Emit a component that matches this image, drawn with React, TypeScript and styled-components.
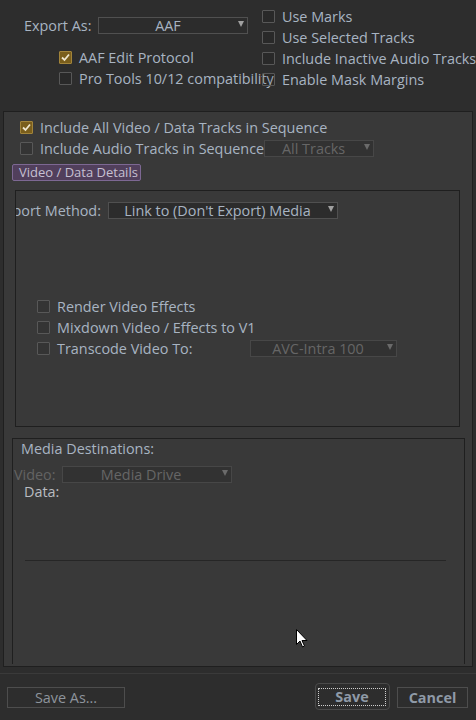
import React from "react";
import styled, { createGlobalStyle } from "styled-components";

const Global = createGlobalStyle`
  html, body { margin: 0; padding: 0; background: #2d2d2d; }
  body { font-family: "Open Sans", "Noto Sans", sans-serif; font-size: 14.4px; color: #a8b4c2; }
  #root { width: 476px; height: 720px; overflow: hidden; }
`;

const Page = styled.div`
  position: relative;
  width: 476px;
  height: 720px;
  display: flex;
  flex-direction: column;
  background: #2d2d2d;
  overflow: hidden;
`;

const Header = styled.div`
  flex: none;
  height: 111px;
  display: grid;
  grid-template-columns: 262px 1fr;
`;

const LeftCol = styled.div`
  display: flex;
  flex-direction: column;
  padding-top: 17px;
  min-width: 0;
`;

const RightCol = styled.div`
  display: flex;
  flex-direction: column;
  padding-top: 6px;
  min-width: 0;
  position: relative;
`;

const FieldRow = styled.div<{ $indent?: number; $gap?: number; $top?: number }>`
  display: flex;
  align-items: center;
  height: 17px;
  padding-left: ${(p) => p.$indent ?? 0}px;
  margin-top: ${(p) => p.$top ?? 0}px;
  gap: ${(p) => p.$gap ?? 0}px;
  white-space: nowrap;
`;

const Label = styled.span<{ $disabled?: boolean; $shift?: number }>`
  color: ${(p) => (p.$disabled ? "#636363" : "#a8b4c2")};
  margin-left: ${(p) => p.$shift ?? 0}px;
  white-space: nowrap;
  line-height: 18px;
`;

const CheckList = styled.div<{ $indent?: number; $top?: number }>`
  display: flex;
  flex-direction: column;
  padding-left: ${(p) => p.$indent ?? 0}px;
  margin-top: ${(p) => p.$top ?? 0}px;
`;

const CheckRow = styled.div`
  display: flex;
  align-items: center;
  height: 21px;
  white-space: nowrap;
`;

const CheckWrap = styled.div<{ $width?: number }>`
  display: flex;
  align-items: center;
  gap: 7px;
  flex: none;
  width: ${(p) => (p.$width ? `${p.$width}px` : "auto")};
`;

const Box = styled.span<{ $checked?: boolean }>`
  position: relative;
  z-index: 1;
  flex: none;
  width: 13px;
  height: 13px;
  box-sizing: border-box;
  border: 1px solid ${(p) => (p.$checked ? "#a2843a" : "#585858")};
  background: ${(p) => (p.$checked ? "#7a5e1c" : "rgba(0,0,0,0.08)")};
  border-radius: 1px;
  display: flex;
  align-items: center;
  justify-content: center;
`;

const SelectBox = styled.div<{ $width: number; $disabled?: boolean }>`
  flex: none;
  box-sizing: border-box;
  width: ${(p) => p.$width}px;
  height: 17px;
  border: 1px solid ${(p) => (p.$disabled ? "#474747" : "#505050")};
  background: ${(p) => (p.$disabled ? "#323232" : "#2c2c2c")};
  display: flex;
  align-items: flex-start;
  color: ${(p) => (p.$disabled ? "#666666" : "#a8b4c2")};
`;

const SelectText = styled.span`
  flex: 1;
  text-align: center;
  line-height: 16px;
  height: 15px;
  white-space: nowrap;
`;

const Arrow = styled.span<{ $disabled?: boolean }>`
  flex: none;
  width: 0;
  height: 0;
  margin: 3px 3px 0 2px;
  border-left: 3.5px solid transparent;
  border-right: 3.5px solid transparent;
  border-top: 6px solid ${(p) => (p.$disabled ? "#6a6a6a" : "#a0a0a0")};
`;

const Panel = styled.div`
  flex: 1;
  margin: 0 3px;
  border: 1px solid #1f1f1f;
  background: #393939;
  display: flex;
  flex-direction: column;
  padding: 5px 0 2px 0;
  min-height: 0;
`;

const TabButton = styled.div`
  align-self: flex-start;
  margin: 5px 0 0 8px;
  box-sizing: border-box;
  height: 17px;
  width: 129px;
  padding-left: 6px;
  background: #513f5c;
  border: 1px solid #7d6893;
  border-radius: 2px;
  color: #c6c0d2;
  font-size: 13px;
  line-height: 15px;
  white-space: nowrap;
`;

const InnerBox = styled.div`
  flex: none;
  margin: 9px 0 0 11px;
  width: 445px;
  height: 237px;
  box-sizing: border-box;
  border: 1px solid #1f1f1f;
  overflow: hidden;
  display: flex;
  flex-direction: column;
  padding-top: 11px;
`;

const DestBox = styled.div`
  flex: 1;
  margin: 11px 0 0 8px;
  width: 453px;
  box-sizing: border-box;
  border: 1px solid #1f1f1f;
  border-bottom: none;
  display: flex;
  flex-direction: column;
`;

const DestTitle = styled.div`
  padding-left: 8px;
  height: 20px;
  line-height: 20px;
  white-space: nowrap;
`;

const DataRow = styled.div`
  padding-left: 11px;
  height: 18px;
  line-height: 18px;
  color: #b9bcc0;
`;

const Rule = styled.div`
  margin: 59px 0 0 12px;
  width: 421px;
  height: 1px;
  background: #262626;
`;

const Footer = styled.div`
  flex: none;
  margin-top: 6px;
  height: 46px;
  border-top: 1px solid #3a3a3a;
  display: flex;
  align-items: center;
  padding: 0 8px 0 7px;
`;

const Button = styled.div<{ $width: number; $bold?: boolean }>`
  box-sizing: border-box;
  width: ${(p) => p.$width}px;
  height: 21px;
  border: 1px solid #4d4d4d;
  text-align: center;
  line-height: 19px;
  color: ${(p) => (p.$bold ? "#8f9aa7" : "#8d949c")};
  font-weight: ${(p) => (p.$bold ? 700 : 400)};
  white-space: nowrap;
`;

const Spacer = styled.div`
  flex: 1;
`;

const FocusRing = styled.div`
  box-sizing: border-box;
  width: 75px;
  height: 27px;
  border: 1px solid #4a4a4a;
  border-radius: 4px;
  padding: 4px 3px 3px 2px;
  margin-right: 7px;
  display: flex;
  margin-top: -2px;
`;

const FocusInner = styled.div`
  flex: 1;
  border: 1px dotted #cfcfcf;
  text-align: center;
  line-height: 16px;
  font-weight: 700;
  color: #8f9aa7;
`;

const CursorLayer = styled.svg`
  position: absolute;
  left: 296px;
  top: 629px;
  width: 13px;
  height: 20px;
`;

function Check({ label, checked, width, disabled }: { label: string; checked?: boolean; width?: number; disabled?: boolean }) {
  return (
    <CheckWrap $width={width}>
      <Box $checked={checked}>
        {checked && (
          <svg width="11" height="11" viewBox="0 0 11 11">
            <polyline points="2,5.5 4.5,8 9,2.5" fill="none" stroke="#efe6cf" strokeWidth="1.8" />
          </svg>
        )}
      </Box>
      <Label $disabled={disabled}>{label}</Label>
    </CheckWrap>
  );
}

function Select({ value, width, disabled }: { value: string; width: number; disabled?: boolean }) {
  return (
    <SelectBox $width={width} $disabled={disabled}>
      <SelectText>{value}</SelectText>
      <Arrow $disabled={disabled} />
    </SelectBox>
  );
}

export default function App() {
  return (
    <Page>
      <Global />
      <Header>
        <LeftCol>
          <FieldRow $indent={24} $gap={7}>
            <Label>Export As:</Label>
            <Select value="AAF" width={150} />
          </FieldRow>
          <CheckList $indent={59} $top={13}>
            <CheckRow><Check label="AAF Edit Protocol" checked /></CheckRow>
            <CheckRow><Check label="Pro Tools 10/12 compatibility" /></CheckRow>
          </CheckList>
        </LeftCol>
        <RightCol>
          <CheckList>
            <CheckRow><Check label="Use Marks" /></CheckRow>
            <CheckRow><Check label="Use Selected Tracks" /></CheckRow>
            <CheckRow><Check label="Include Inactive Audio Tracks" /></CheckRow>
            <CheckRow><Check label="Enable Mask Margins" /></CheckRow>
          </CheckList>
        </RightCol>
      </Header>
      <Panel>
        <CheckList $indent={16}>
          <CheckRow><Check label="Include All Video / Data Tracks in Sequence" checked /></CheckRow>
          <CheckRow>
            <Check label="Include Audio Tracks in Sequence" />
            <Select value="All Tracks" width={110} disabled />
          </CheckRow>
        </CheckList>
        <TabButton>Video / Data Details</TabButton>
        <InnerBox>
          <FieldRow $gap={7}>
            <Label $shift={-19}>Export Method:</Label>
            <Select value="Link to (Don't Export) Media" width={230} />
          </FieldRow>
          <CheckList $indent={21} $top={77}>
            <CheckRow><Check label="Render Video Effects" /></CheckRow>
            <CheckRow><Check label="Mixdown Video / Effects to V1" /></CheckRow>
            <CheckRow>
              <Check label="Transcode Video To:" width={213} />
              <Select value="AVC-Intra 100" width={147} disabled />
            </CheckRow>
          </CheckList>
        </InnerBox>
        <DestBox>
          <DestTitle>Media Destinations:</DestTitle>
          <FieldRow $indent={1} $gap={6} $top={7}>
            <Label $disabled>Video:</Label>
            <Select value="Media Drive" width={170} disabled />
          </FieldRow>
          <DataRow>Data:</DataRow>
          <Rule />
        </DestBox>
      </Panel>
      <Footer>
        <Button $width={118}>Save As...</Button>
        <Spacer />
        <FocusRing>
          <FocusInner>Save</FocusInner>
        </FocusRing>
        <Button $width={71} $bold>Cancel</Button>
      </Footer>
      <CursorLayer viewBox="0 0 13 20">
        <path d="M0.5 0.5 L0.5 15.5 L4 12 L6.5 18 L8.5 17 L6 11.5 L11 11.5 Z" fill="#ffffff" stroke="#000000" strokeWidth="1" />
      </CursorLayer>
    </Page>
  );
}
